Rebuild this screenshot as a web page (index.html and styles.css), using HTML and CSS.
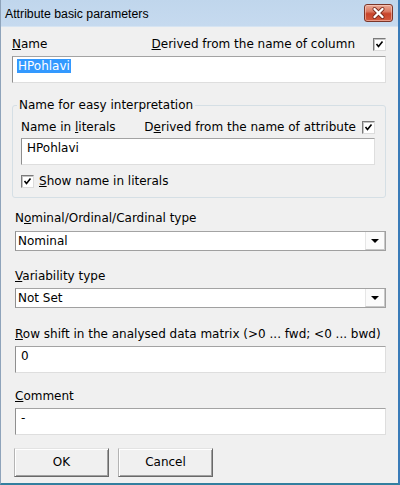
FILE: index.html
```html
<!DOCTYPE html>
<html>
<head>
<meta charset="utf-8">
<link rel="stylesheet" href="styles.css">
</head>
<body>
<div class="window">
  <div class="titlebar">
    <span class="title">Attribute basic parameters</span>
    <div class="close">
      <svg width="29" height="18" viewBox="0 0 29 18">
        <path d="M10.5 5 L18.5 13 M18.5 5 L10.5 13" stroke="#7a2a1c" stroke-width="4" stroke-linecap="round"/>
        <path d="M10.5 5 L18.5 13 M18.5 5 L10.5 13" stroke="#ffffff" stroke-width="2.4" stroke-linecap="round"/>
      </svg>
    </div>
  </div>
  <div class="client">
    <div class="head-row">
      <span><u>N</u>ame</span>
      <div class="derived derived-col">
        <span><u>D</u>erived from the name of column</span>
        <span class="cb"><svg width="11" height="11" viewBox="0 0 11 11"><path d="M2.5 5 L4.5 7.5 L8.5 2.5" fill="none" stroke="#000" stroke-width="1.6"/></svg></span>
      </div>
    </div>
    <div class="textbox tb-name"><span class="sel">HPohlavi</span></div>

    <fieldset class="group">
      <legend>Name for easy interpretation</legend>
      <div class="group-body">
        <div class="head-row">
          <span>Name in <u>l</u>iterals</span>
          <div class="derived derived-attr">
            <span>D<u>e</u>rived from the name of attribute</span>
            <span class="cb"><svg width="11" height="11" viewBox="0 0 11 11"><path d="M2.5 5 L4.5 7.5 L8.5 2.5" fill="none" stroke="#000" stroke-width="1.6"/></svg></span>
          </div>
        </div>
        <div class="textbox tb-lit">HPohlavi</div>
        <div class="check-row">
          <span class="cb"><svg width="11" height="11" viewBox="0 0 11 11"><path d="M2.5 5 L4.5 7.5 L8.5 2.5" fill="none" stroke="#000" stroke-width="1.6"/></svg></span>
          <span><u>S</u>how name in literals</span>
        </div>
      </div>
    </fieldset>

    <div class="lbl lbl-nom">N<u>o</u>minal/Ordinal/Cardinal type</div>
    <div class="combo combo-nom"><span class="combo-text">Nominal</span><span class="combo-btn"><span class="arrow"></span></span></div>

    <div class="lbl lbl-var"><u>V</u>ariability type</div>
    <div class="combo combo-var"><span class="combo-text">Not Set</span><span class="combo-btn"><span class="arrow"></span></span></div>

    <div class="lbl lbl-row"><u>R</u>ow shift in the analysed data matrix (&gt;0 ... fwd; &lt;0 ... bwd)</div>
    <div class="textbox tb-field">0</div>

    <div class="lbl lbl-com"><u>C</u>omment</div>
    <div class="textbox tb-field">-</div>

    <div class="buttons">
      <div class="btn">OK</div>
      <div class="btn">Cancel</div>
    </div>
  </div>
</div>
</body>
</html>
```

FILE: styles.css
```css
html, body {
  margin: 0;
  padding: 0;
}
body {
  width: 400px;
  height: 485px;
  overflow: hidden;
  font-family: "DejaVu Sans", sans-serif;
  font-size: 12px;
  line-height: 15px;
  color: #000;
}
u {
  text-decoration: underline;
  text-underline-offset: 1px;
}
.window {
  box-sizing: border-box;
  width: 400px;
  height: 485px;
  border-left: 1px solid #8ea3ba;
  border-right: 2px solid #3a7bb8;
  border-bottom: 2px solid #327f9f;
  background: #f0f0f0;
  display: flex;
  flex-direction: column;
}
.titlebar {
  box-sizing: border-box;
  height: 27px;
  flex: none;
  display: flex;
  align-items: flex-start;
  padding-left: 4px;
  background: linear-gradient(#c0d6ec, #c6daef);
  border-bottom: 1px solid #d6e4f2;
}
.title {
  font-family: "Liberation Sans", Arial, sans-serif;
  font-size: 12.3px;
  line-height: 15px;
  margin-top: 7px;
  color: #000;
}
.close {
  margin-left: auto;
  margin-right: 5px;
  margin-top: 4px;
  width: 29px;
  height: 18px;
  box-sizing: border-box;
  border: 1px solid #7b3528;
  border-radius: 3px;
  background: linear-gradient(#eaa996 0%, #dc7b64 40%, #c8432a 55%, #d35a3e 100%);
  box-shadow: inset 0 0 0 1px rgba(255, 220, 210, 0.5);
  display: flex;
  align-items: center;
  justify-content: center;
}
.close svg {
  display: block;
  margin: -1px;
}
.client {
  flex: 1;
  display: flex;
  flex-direction: column;
  padding: 10px 12px 0 11px;
}
.head-row {
  display: flex;
  justify-content: space-between;
  align-items: flex-start;
  height: 15px;
}
.derived {
  display: flex;
  align-items: flex-start;
}
.derived-col {
  gap: 18px;
}
.derived-attr {
  gap: 6px;
}
.cb {
  box-sizing: border-box;
  width: 13px;
  height: 13px;
  margin-top: 1px;
  background: #fff;
  border: 1px solid;
  border-color: #7a7a7a #dcdcdc #dcdcdc #7a7a7a;
  box-shadow: inset 1px 1px 0 #c4c4c4;
  display: flex;
  align-items: center;
  justify-content: center;
  flex: none;
}
.cb svg {
  display: block;
}
.textbox {
  box-sizing: border-box;
  height: 27px;
  background: #fff;
  border: 1px solid;
  border-color: #a3a3a3 #dedede #dedede #8f8f8f;
  padding: 2px 5px;
  white-space: nowrap;
}
.tb-name {
  margin-top: 4px;
}
.sel {
  background: #3399ff;
  color: #fff;
  padding: 0 1px;
  margin-left: -1px;
}
.group {
  margin: 15px 0 0 0;
  padding: 7px 10px 8px 4px;
  border: 1px solid #d5dfe5;
  border-radius: 3px;
  min-width: 0;
}
.group legend {
  padding: 0 2px;
  line-height: 15px;
}
.group-body {
  padding-left: 4px;
}
.tb-lit {
  margin-top: 3px;
}
.check-row {
  display: flex;
  align-items: flex-start;
  gap: 5px;
  margin-top: 9px;
  height: 15px;
}
.lbl {
  margin-left: 3px;
  white-space: nowrap;
}
.lbl-nom {
  margin-top: 13px;
}
.lbl-var {
  margin-top: 18px;
}
.lbl-row {
  margin-top: 19px;
}
.lbl-com {
  margin-top: 16px;
}
.combo {
  box-sizing: border-box;
  height: 20px;
  margin-left: 3px;
  background: #fff;
  border: 1px solid;
  border-color: #a3a3a3 #a0a0a0 #a0a0a0 #8f8f8f;
  display: flex;
}
.combo-nom {
  margin-top: 5px;
}
.combo-var {
  margin-top: 4px;
}
.combo-text {
  flex: 1;
  padding: 2px 2px 0;
}
.combo-btn {
  width: 18px;
  border-left: 1px solid #e6e6e6;
  border-bottom: 1px solid #c8c8c8;
  border-right: 1px solid #c8c8c8;
  display: flex;
  align-items: center;
  justify-content: center;
  background: #fbfbfb;
}
.arrow {
  width: 0;
  height: 0;
  border-left: 4px solid transparent;
  border-right: 4px solid transparent;
  border-top: 4px solid #000;
}
.tb-field {
  margin-top: 4px;
  margin-left: 3px;
}
.buttons {
  display: flex;
  gap: 9px;
  margin-top: 13px;
  margin-left: 2px;
}
.btn {
  box-sizing: border-box;
  width: 95px;
  height: 29px;
  background: #f0f0f0;
  border: 1px solid;
  border-color: #e3e3e3 #696969 #696969 #b4b4b4;
  box-shadow: inset 1px 1px 0 #ffffff, inset -1px -1px 0 #a0a0a0;
  display: flex;
  align-items: center;
  justify-content: center;
  padding-bottom: 1px;
}
```
